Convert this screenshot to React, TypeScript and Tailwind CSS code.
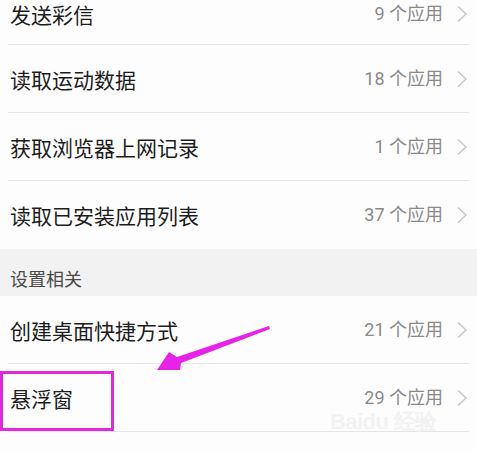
const topRows = [
  { name: '发送彩信', count: 9 },
  { name: '读取运动数据', count: 18 },
  { name: '获取浏览器上网记录', count: 1 },
  { name: '读取已安装应用列表', count: 37 },
];

const settingRows = [
  { name: '创建桌面快捷方式', count: 21 },
  { name: '悬浮窗', count: 29 },
];

function Chevron() {
  return (
    <svg width="12" height="18" viewBox="0 0 12 18" className="ml-[13px]">
      <polyline points="2,1.5 10,9 2,16.5" fill="none" stroke="#c6c6c6" strokeWidth="1.4" />
    </svg>
  );
}

function Row({ name, count, last, first }: { name: string; count: number; last?: boolean; first?: boolean }) {
  return (
    <div
      className={`mx-[8px] flex justify-between pl-[2px] pr-[1px] ${first ? 'h-[45px] items-start pt-[2px]' : 'h-[68px] items-center'} ${last ? '' : 'border-b border-[#e6e6e6]'}`}
    >
      <span className="text-[21px] leading-[24px] text-[#1c1c1c]">{name}</span>
      <div className="flex items-center h-[24px]">
        <span className="text-[18px] leading-[24px] text-[#8a8a8a] font-['Roboto','Noto_Sans_CJK_SC',sans-serif]">
          {count} 个应用
        </span>
        <Chevron />
      </div>
    </div>
  );
}

export default function App() {
  return (
    <div className="relative w-[477px] h-[450px] overflow-hidden bg-[#fdfdfd] font-['Noto_Sans_CJK_SC','Noto_Sans',sans-serif]">
      {topRows.map((r, i) => (
        <Row key={r.name} name={r.name} count={r.count} first={i === 0} last={i === topRows.length - 1} />
      ))}

      {/* Section header */}
      <div className="h-[47px] bg-[#f2f2f2] pl-[10px] pt-[18px]">
        <span className="text-[18px] leading-[20px] text-[#4a4a4a]">设置相关</span>
      </div>

      {settingRows.map((r) => (
        <Row key={r.name} name={r.name} count={r.count} />
      ))}

      {/* Baidu watermark */}
      <span className="absolute left-[330px] top-[405px] text-[22px] font-bold text-[#f2f2f2] tracking-tight font-['Liberation_Sans',sans-serif] pointer-events-none">
        Baidu 经验
      </span>

      {/* Annotation: arrow */}
      <svg className="absolute left-0 top-0 pointer-events-none" width="477" height="450">
        <polygon points="269,326 177,357 169,352 157,370 180,370 181,363 270,329" fill="#e623e6" />
      </svg>

      {/* Annotation: box */}
      <div className="absolute left-0 top-[371px] w-[114px] h-[60px] border-[3px] border-[#dc2adc] pointer-events-none" />
    </div>
  );
}
